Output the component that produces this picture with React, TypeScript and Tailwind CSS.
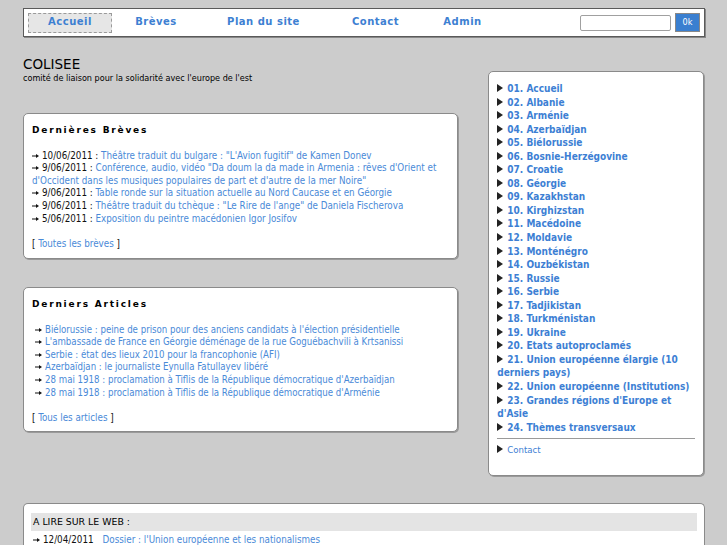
const breves = [
  { date: "10/06/2011", title: "Théâtre traduit du bulgare : \"L'Avion fugitif\" de Kamen Donev" },
  {
    date: "9/06/2011",
    title:
      "Conférence, audio, vidéo \"Da doum la da made in Armenia : rêves d'Orient et d'Occident dans les musiques populaires de part et d'autre de la mer Noire\"",
  },
  { date: "9/06/2011", title: "Table ronde sur la situation actuelle au Nord Caucase et en Géorgie" },
  { date: "9/06/2011", title: "Théâtre traduit du tchèque : \"Le Rire de l'ange\" de Daniela Fischerova" },
  { date: "5/06/2011", title: "Exposition du peintre macédonien Igor Josifov" },
];

const articles = [
  "Biélorussie : peine de prison pour des anciens candidats à l'élection présidentielle",
  "L'ambassade de France en Géorgie déménage de la rue Goguébachvili à Krtsanissi",
  "Serbie : état des lieux 2010 pour la francophonie (AFI)",
  "Azerbaïdjan : le journaliste Eynulla Fatullayev libéré",
  "28 mai 1918 : proclamation à Tiflis de la République démocratique d'Azerbaïdjan",
  "28 mai 1918 : proclamation à Tiflis de la République démocratique d'Arménie",
];

const rubriques = [
  "01. Accueil",
  "02. Albanie",
  "03. Arménie",
  "04. Azerbaïdjan",
  "05. Biélorussie",
  "06. Bosnie-Herzégovine",
  "07. Croatie",
  "08. Géorgie",
  "09. Kazakhstan",
  "10. Kirghizstan",
  "11. Macédoine",
  "12. Moldavie",
  "13. Monténégro",
  "14. Ouzbékistan",
  "15. Russie",
  "16. Serbie",
  "17. Tadjikistan",
  "18. Turkménistan",
  "19. Ukraine",
  "20. Etats autoproclamés",
  "21. Union européenne élargie (10 derniers pays)",
  "22. Union européenne (Institutions)",
  "23. Grandes régions d'Europe et d'Asie",
  "24. Thèmes transversaux",
];

const nav = [
  { label: "Accueil", w: "w-[84px]", active: true },
  { label: "Brèves", w: "w-[88px]" },
  { label: "Plan du site", w: "w-[127px]" },
  { label: "Contact", w: "w-[97px]" },
  { label: "Admin", w: "w-[77px]" },
];

// petite flèche noire devant chaque ligne
function Arrow() {
  return (
    <svg width="7" height="6" viewBox="0 0 7 6" className="mr-[3px] inline-block align-[0px]">
      <path d="M0 2.5 H4 V1 L7 3 L4 5 V3.5 H0 Z" fill="#111" />
    </svg>
  );
}

function Tri() {
  return (
    <svg width="6" height="8" viewBox="0 0 6 8" className="mr-[4px] inline-block align-[-0px]">
      <path d="M0 0 L6 4 L0 8 Z" fill="#222" />
    </svg>
  );
}

function Card({ title, children, className }: { title: string; children: React.ReactNode; className?: string }) {
  return (
    <div
      className={`rounded-[5px] border border-[#8a8a8a] bg-white px-[8px] shadow-[1px_1px_0_#9a9a9a] ${className ?? ""}`}
    >
      <h2 className="pt-[10px] font-['DejaVu_Sans',sans-serif] text-[9px] leading-[12.6px] font-bold tracking-[1.8px] text-black">
        {title}
      </h2>
      {children}
    </div>
  );
}

export default function App() {
  return (
    <div className="min-h-[545px] bg-[#cccccc] pt-[8px] font-['DejaVu_Sans_Condensed','DejaVu_Sans',sans-serif] text-[9.75px] leading-[12.6px] text-[#111]">
      {/* barre de navigation */}
      <div className="ml-[23px] flex h-[29px] w-[682px] items-center border border-[#5a5a5a] bg-white pl-[4px] pr-[4px] shadow-[1px_1px_0_#888]">
        {nav.map((n) => (
          <div
            key={n.label}
            className={`${n.w} flex h-[20px] items-center justify-center font-['DejaVu_Sans',sans-serif] text-[10px] font-bold tracking-[0.5px] text-[#3d80d2] ${
              n.active ? "border border-dashed border-[#9a9a9a] bg-[#e6e6e6]" : ""
            }`}
          >
            {n.label}
          </div>
        ))}
        <div className="ml-auto flex items-center gap-[4px]">
          <div className="h-[16px] w-[91px] rounded-[2px] border border-[#a0a0a0] bg-white" />
          <div className="flex h-[19px] w-[25px] items-center justify-center border border-[#888] bg-[#3a7fd0] text-[9px] text-white">
            0k
          </div>
        </div>
      </div>

      <div className="ml-[23px] flex w-[681px] gap-[30px]">
        {/* colonne principale */}
        <div className="w-[436px]">
          <div className="pt-[19px]">
            <div className="font-['DejaVu_Sans',sans-serif] text-[13.5px] leading-[16px] text-black">COLISEE</div>
            <div className="text-[9px] leading-[13px] text-black">
              comité de liaison pour la solidarité avec l'europe de l'est
            </div>
          </div>

          <Card title="Dernières Brèves" className="mt-[28px] h-[146px]">
            <ul className="mt-[13px]">
              {breves.map((b, i) => (
                <li key={i}>
                  <Arrow />
                  <span>{b.date}</span> : <a className="text-[#4a8ad8]">{b.title}</a>
                </li>
              ))}
            </ul>
            <p className="mt-[13px]">
              [ <a className="text-[#4a8ad8]">Toutes les brèves</a> ]
            </p>
          </Card>

          <Card title="Derniers Articles" className="mt-[28px] h-[145px]">
            <ul className="mt-[13px] pl-[3px] text-[9.6px]">
              {articles.map((a) => (
                <li key={a}>
                  <Arrow />
                  <a className="text-[#4a8ad8]">{a}</a>
                </li>
              ))}
            </ul>
            <p className="mt-[13px]">
              [ <a className="text-[#4a8ad8]">Tous les articles</a> ]
            </p>
          </Card>
        </div>

        {/* rubriques */}
        <div className="mt-[34px] h-[405px] w-[216px] rounded-[5px] border border-[#8a8a8a] bg-white px-[8px] pt-[10px] shadow-[1px_1px_0_#9a9a9a]">
          <ul className="text-[10px] leading-[13.55px] font-bold text-[#3d7fd4]">
            {rubriques.map((r) => (
              <li key={r}>
                <Tri />
                {r}
              </li>
            ))}
          </ul>
          <hr className="mt-[4px] border-t border-[#9a9a9a]" />
          <div className="mt-[5px] text-[9.5px] text-[#3d7fd4]">
            <Tri />
            Contact
          </div>
        </div>
      </div>

      {/* à lire sur le web */}
      <div className="ml-[23px] mt-[27px] w-[682px] rounded-t-[5px] border border-b-0 border-[#8a8a8a] bg-white px-[7px] pt-[9px]">
        <div className="flex h-[18px] items-center bg-[#e4e4e4] pl-[2px] font-['DejaVu_Sans',sans-serif] text-[9.4px] text-black">
          A LIRE SUR LE WEB :
        </div>
        <div className="mt-[3px] pl-[2px]">
          <Arrow />
          <span>12/04/2011</span>
          <a className="ml-[9px] text-[#4a8ad8]">Dossier : l'Union européenne et les nationalismes</a>
        </div>
      </div>
    </div>
  );
}
